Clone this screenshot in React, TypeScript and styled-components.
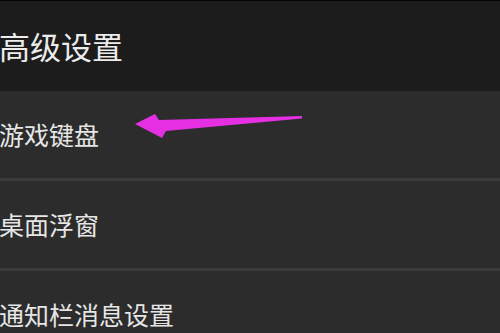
import styled, { createGlobalStyle } from 'styled-components'

const items = ['游戏键盘', '桌面浮窗', '通知栏消息设置']

export default function App() {
  return (
    <>
      <GlobalStyle />
      <Screen>
        <Header>
          <Title>高级设置</Title>
        </Header>
        <List>
          {items.map((label, i) => (
            <Row key={label} $last={i === items.length - 1}>
              <Label>{label}</Label>
              {i === 0 && (
                <Arrow viewBox="0 0 500 333" aria-hidden>
                  <polygon
                    points="135,123 155,113 159,119 302,115 302,117.5 166,130 162,137"
                    fill="#e42fe2"
                  />
                </Arrow>
              )}
            </Row>
          ))}
        </List>
      </Screen>
    </>
  )
}

const GlobalStyle = createGlobalStyle`
  html, body {
    margin: 0;
    padding: 0;
    background: #2c2c2c;
  }
  body {
    font-family: "Noto Sans CJK SC", "Noto Sans", sans-serif;
  }
`

const Screen = styled.div`
  width: 500px;
  height: 333px;
  overflow: hidden;
  position: relative;
  background: #2c2c2c;
  border-top: 1px solid #050505;
  box-sizing: border-box;
`

const Header = styled.div`
  height: 90px;
  background: #1c1c1c;
  display: flex;
  align-items: center;
  padding-bottom: 2px;
  box-sizing: border-box;
`

const Title = styled.h1`
  margin: 0 0 0 -1px;
  font-size: 31px;
  font-weight: 400;
  color: #ececec;
  letter-spacing: 0;
  line-height: 1;
`

const List = styled.div`
  display: flex;
  flex-direction: column;
`

const Row = styled.div<{ $last?: boolean }>`
  height: 87px;
  display: flex;
  align-items: center;
  border-bottom: ${(p) => (p.$last ? 'none' : '3px solid #3b3b3b')};
  background: #2c2c2c;
`

const Label = styled.span`
  margin-left: -1px;
  font-size: 25px;
  color: #e6e6e6;
  line-height: 1;
`

const Arrow = styled.svg`
  position: absolute;
  left: 0;
  top: 0;
  width: 500px;
  height: 333px;
  pointer-events: none;
`
